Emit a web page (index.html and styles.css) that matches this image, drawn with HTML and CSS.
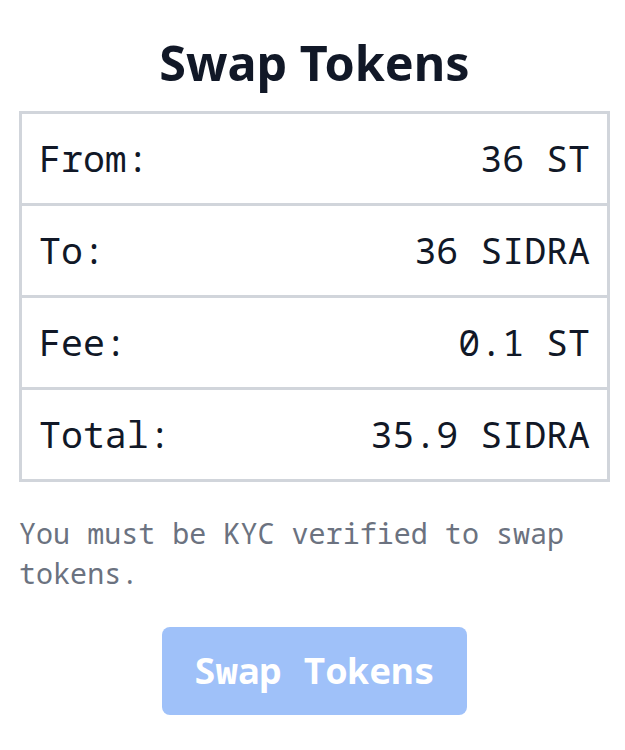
FILE: index.html
```html
<!DOCTYPE html>
<html lang="en">
<head>
    <meta charset="UTF-8">
    <meta name="viewport" content="width=device-width, initial-scale=1.0">
    <title>Swap Tokens</title>

    <link rel="stylesheet" href="styles.css">
</head>
<body>

    <main class="swap">

        <h1 class="titulo">Swap Tokens</h1>

        <div class="detalhes">
            <div class="linha">
                <span>From:</span>
                <span>36 ST</span>
            </div>
            <div class="linha">
                <span>To:</span>
                <span>36 SIDRA</span>
            </div>
            <div class="linha">
                <span>Fee:</span>
                <span>0.1 ST</span>
            </div>
            <div class="linha">
                <span>Total:</span>
                <span>35.9 SIDRA</span>
            </div>
        </div>

        <p class="aviso">You must be KYC verified to swap tokens.</p>

        <div class="acoes">
            <button class="btn-swap" type="button" disabled>Swap Tokens</button>
        </div>

    </main>

</body>
</html>
```

FILE: styles.css
```css
body{
  margin: 0;
  background: white;
  color: #111827;
  font-family: 'Noto Sans Mono', 'DejaVu Sans Mono', monospace;
}

.swap{
  padding: 0 15px 0 19px;
}

.titulo{
  margin: 32px 0 19px;
  font-family: 'Noto Sans', sans-serif;
  font-size: 48.5px;
  line-height: 60px;
  font-weight: 700;
  text-align: center;
}

.detalhes{
  border: 3px solid #d1d5db;
}

.linha{
  display: flex;
  justify-content: space-between;
  padding: 24px 17px;
  font-size: 36.6px;
  line-height: 41px;
  border-bottom: 3px solid #d1d5db;
}

.linha:last-child{
  border-bottom: none;
}

.aviso{
  margin: 31px 0 34px 0;
  font-size: 28.4px;
  line-height: 40px;
  color: #6b7280;
}

.acoes{
  display: flex;
  justify-content: center;
}

.btn-swap{
  padding: 23px 32px 25px;
  border: none;
  border-radius: 8px;
  background-color: #9fc1f9;
  color: white;
  font-family: inherit;
  font-size: 36.6px;
  line-height: 40px;
  font-weight: 700;
}
```
